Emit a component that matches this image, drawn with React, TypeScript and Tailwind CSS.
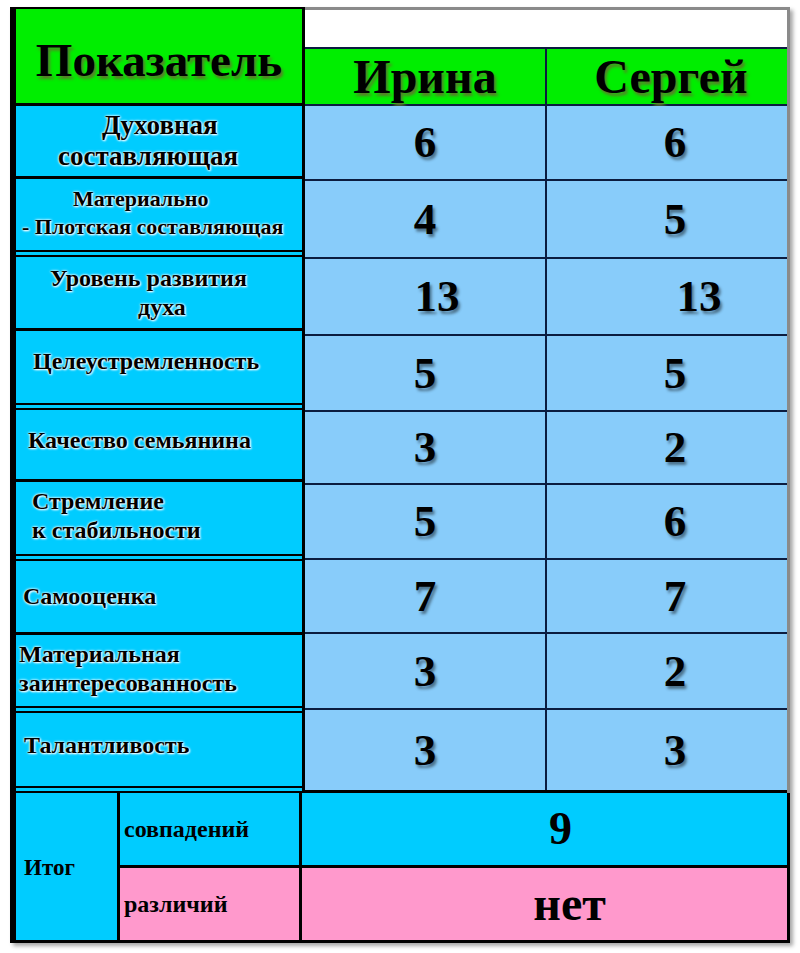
import React from "react";

const serif = "font-['Liberation_Serif','Times_New_Roman',serif] font-bold";
const glow = "[text-shadow:0_0_2px_#fff,0_0_3px_#fff,1px_1px_2px_#fff]";
const drop = "[text-shadow:2px_3px_3px_rgba(0,0,0,0.45)]";
const head = "[text-shadow:2px_3px_3px_#5c7a2a]";

type Line = { t: string; ml: string };
type Label = { lines: Line[]; h: string; size: string; dbl: boolean; extra?: string };

const labels: Label[] = [
  { lines: [{ t: "Духовная", ml: "ml-[86px]" }, { t: "составляющая", ml: "ml-[42px]" }], h: "h-[73px]", size: "text-[27px] leading-[31px]", dbl: false },
  { lines: [{ t: "Материально", ml: "ml-[57px]" }, { t: "- Плотская составляющая", ml: "ml-[6px]" }], h: "h-[78px]", size: "text-[22px] leading-[28px]", dbl: true, extra: "pb-1" },
  { lines: [{ t: "Уровень развития", ml: "ml-[34px]" }, { t: "духа", ml: "ml-[122px]" }], h: "h-[74px]", size: "text-[24px] leading-[29px]", dbl: false },
  { lines: [{ t: "Целеустремленность", ml: "ml-[17px]" }], h: "h-[79px]", size: "text-[24px] leading-[29px]", dbl: true, extra: "pb-3" },
  { lines: [{ t: "Качество семьянина", ml: "ml-[12px]" }], h: "h-[72px]", size: "text-[24px] leading-[29px]", dbl: false, extra: "pb-2" },
  { lines: [{ t: "Стремление", ml: "ml-[16px]" }, { t: "к стабильности", ml: "ml-[16px]" }], h: "h-[79px]", size: "text-[24px] leading-[29px]", dbl: true, extra: "pb-1" },
  { lines: [{ t: "Самооценка", ml: "ml-[7px]" }], h: "h-[74px]", size: "text-[24px] leading-[29px]", dbl: false },
  { lines: [{ t: "Материальная", ml: "ml-[3px]" }, { t: "заинтересованность", ml: "ml-[3px]" }], h: "h-[78px]", size: "text-[24px] leading-[29px]", dbl: true, extra: "pb-1" },
  { lines: [{ t: "Талантливость", ml: "ml-[8px]" }], h: "h-[80px]", size: "text-[24px] leading-[29px]", dbl: true, extra: "pb-2" },
];

const values: { a: string; b: string; h: string; pa: string; pb: string }[] = [
  { a: "6", b: "6", h: "h-[75px]", pa: "", pb: "pl-4" },
  { a: "4", b: "5", h: "h-[78px]", pa: "", pb: "pl-4" },
  { a: "13", b: "13", h: "h-[77px]", pa: "pl-6", pb: "pl-[64px]" },
  { a: "5", b: "5", h: "h-[76px]", pa: "", pb: "pl-4" },
  { a: "3", b: "2", h: "h-[73px]", pa: "", pb: "pl-4" },
  { a: "5", b: "6", h: "h-[75px]", pa: "", pb: "pl-4" },
  { a: "7", b: "7", h: "h-[74px]", pa: "", pb: "pl-4" },
  { a: "3", b: "2", h: "h-[76px]", pa: "", pb: "pl-4" },
];

export default function App() {
  return (
    <div className="min-h-screen bg-white pt-[7px] pl-[10px]">
      <div className={`w-[780px] border-l-[6px] border-black shadow-[3px_3px_4px_rgba(0,0,0,0.35)] ${serif} text-black`}>
        {/* header */}
        <div className="flex h-[99px]">
          <div className="w-[289px] flex items-center justify-center bg-[#00ee00] border-t-2 border-b-[3px] border-r-[3px] border-black pt-2">
            <span className={`text-[47px] leading-none ${head}`}>Показатель</span>
          </div>
          <div className="flex-1 flex flex-col border-r-[3px] border-[#8a8a8a]">
            <div className="h-[40px] bg-white border-t-[3px] border-[#8a8a8a]" />
            <div className="flex-1 flex bg-[#00ee00] border-t-2 border-b-2 border-[#0b1c3f]">
              <div className="w-[242px] flex items-center justify-center border-r-2 border-[#0b1c3f]">
                <span className={`text-[48px] leading-none ${head}`}>Ирина</span>
              </div>
              <div className="flex-1 flex items-center justify-center pl-2">
                <span className={`text-[48px] leading-none ${head}`}>Сергей</span>
              </div>
            </div>
          </div>
        </div>

        {/* body */}
        <div className="flex">
          <div className="w-[289px] flex flex-col border-r-[3px] border-black">
            {labels.map((l, i) => (
              <div
                key={i}
                className={`${l.h} bg-[#00ccff] flex flex-col justify-center items-start ${l.extra ?? ""} ${l.dbl ? "border-b-[7px] border-double" : "border-b-[3px]"} border-black`}
              >
                {l.lines.map((ln, j) => (
                  <span key={j} className={`${l.size} ${ln.ml} whitespace-nowrap ${glow}`}>{ln.t}</span>
                ))}
              </div>
            ))}
          </div>
          <div className="flex-1 flex flex-col bg-[#88ccfa] border-r-[3px] border-[#8a8a8a]">
            {values.map((v, i) => (
              <div key={i} className={`${v.h} flex border-b-2 border-[#0b1c3f]`}>
                <div className={`w-[242px] flex items-center justify-center border-r-2 border-[#0b1c3f] ${v.pa}`}>
                  <span className={`text-[45px] leading-none ${drop}`}>{v.a}</span>
                </div>
                <div className={`flex-1 flex items-center justify-center ${v.pb}`}>
                  <span className={`text-[45px] leading-none ${drop}`}>{v.b}</span>
                </div>
              </div>
            ))}
            <div className="flex-1 flex border-b-[3px] border-black">
              <div className="w-[242px] flex items-center justify-center border-r-2 border-[#0b1c3f]">
                <span className={`text-[45px] leading-none ${drop}`}>3</span>
              </div>
              <div className="flex-1 flex items-center justify-center pl-4">
                <span className={`text-[45px] leading-none ${drop}`}>3</span>
              </div>
            </div>
          </div>
        </div>

        {/* totals */}
        <div className="flex h-[150px] border-b-[3px] border-black">
          <div className="w-[104px] flex items-center bg-[#00ccff] border-r-[3px] border-black pl-2 pt-1">
            <span className="text-[23px]">Итог</span>
          </div>
          <div className="w-[182px] flex flex-col border-r-[3px] border-black">
            <div className="flex-1 flex items-center bg-[#00ccff] border-b-[3px] border-black pl-1">
              <span className="text-[24px]">совпадений</span>
            </div>
            <div className="flex-1 flex items-center bg-[#ff99cc] pl-1">
              <span className="text-[24px]">различий</span>
            </div>
          </div>
          <div className="flex-1 flex flex-col border-r-[3px] border-black">
            <div className="flex-1 flex items-center justify-center bg-[#00ccff] border-b-[3px] border-black pl-[32px]">
              <span className="text-[46px] leading-none">9</span>
            </div>
            <div className="flex-1 flex items-center justify-center bg-[#ff99cc] pl-[50px]">
              <span className="text-[48px] leading-none">нет</span>
            </div>
          </div>
        </div>
      </div>
    </div>
  );
}
